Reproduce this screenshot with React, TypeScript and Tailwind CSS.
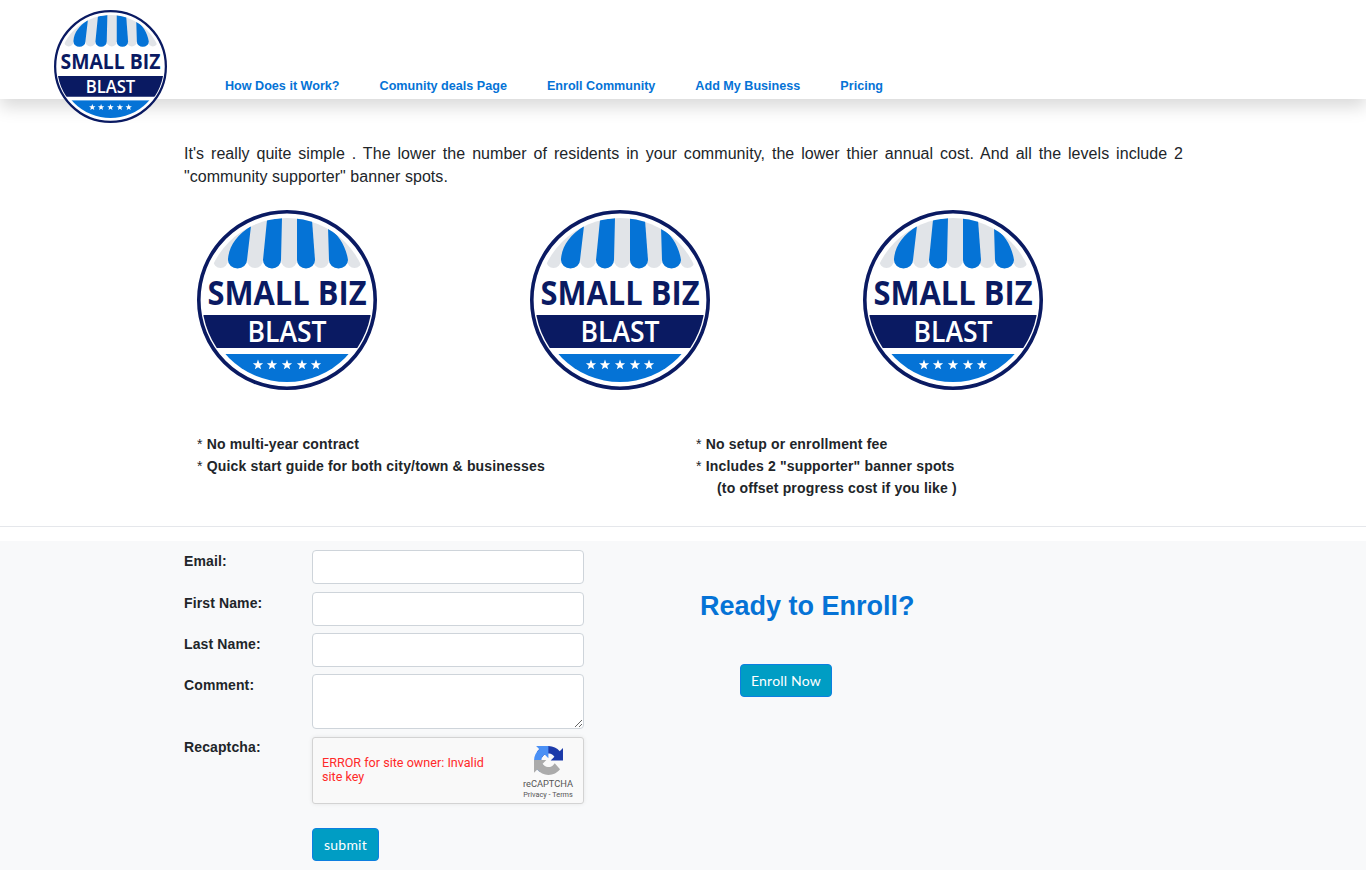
import React from "react";

const stars = [61, 75, 90, 105, 119];

const starPoints = (cx: number, cy: number, r: number) => {
  const pts: string[] = [];
  for (let i = 0; i < 10; i++) {
    const rad = i % 2 === 0 ? r : r * 0.42;
    const a = (Math.PI / 5) * i - Math.PI / 2;
    pts.push(`${(cx + rad * Math.cos(a)).toFixed(2)},${(cy + rad * Math.sin(a)).toFixed(2)}`);
  }
  return pts.join(" ");
};

const Logo: React.FC<{ id: string; className: string }> = ({ id, className }) => (
  <svg viewBox="0 0 180 180" className={`overflow-visible ${className}`}>
    <defs>
      <clipPath id={`${id}-a`}><circle cx="90" cy="90" r="82" /></clipPath>
      <clipPath id={`${id}-b`}><circle cx="90" cy="90" r="85" /></clipPath>
      <clipPath id={`${id}-c`}><circle cx="90" cy="90" r="82" /></clipPath>
    </defs>
    <circle cx="90" cy="90" r="88.2" fill="#fff" stroke="#0a1a62" strokeWidth="3.6" />
    {/* awning */}
    <g clipPath={`url(#${id}-a)`}>
      <path d="M0 0H180V50H165A7.500 8 0 0 1 150 50A9 8 0 0 1 132 50A8 8 0 0 1 116 50A8 8 0 0 1 100 50A8 8 0 0 1 84 50A9 8 0 0 1 66 50A8 8 0 0 1 50 50A9.500 8 0 0 1 31 50A7.500 8 0 0 1 16 50H0Z" fill="#e1e4e8" />
      <path d="M31 49C32 36 40 25 54 16L50 50A9.500 8.500 0 0 1 31 50Z" fill="#0573d6" />
      <path d="M70 10L85 8L84 50A9 8.500 0 0 1 66 50Z" fill="#0573d6" />
      <path d="M100 8L115 10L118 50A9 8.500 0 0 1 100 50Z" fill="#0573d6" />
      <path d="M131 17C141 24 149 36 151 50A9.500 8.500 0 0 1 132 50Z" fill="#0573d6" />
    </g>
    <text x="90" y="94.5" textAnchor="middle" textLength="159" lengthAdjust="spacingAndGlyphs" fontFamily="'Open Sans', sans-serif" fontWeight="700" fontSize="34.500" fill="#0a1a62">SMALL BIZ</text>
    <g clipPath={`url(#${id}-b)`}>
      <path d="M0 105H180L162 138H18Z" fill="#0a1a62" />
    </g>
    <text x="90" y="132" textAnchor="middle" textLength="79" lengthAdjust="spacingAndGlyphs" fontFamily="'Open Sans', sans-serif" fontWeight="600" fontSize="28" fill="#fff">BLAST</text>
    <g clipPath={`url(#${id}-c)`}>
      <rect x="20" y="144" width="140" height="40" fill="#0573d6" />
    </g>
    {stars.map((x) => (
      <polygon key={x} points={starPoints(x, 155, 5.4)} fill="#fff" />
    ))}
  </svg>
);

const RecaptchaIcon = () => (
  <svg viewBox="0 0 64 64" className="w-[29px] h-[29px]">
    <path d="M64 31.955l-.033-1.370V4.687l-7.160 7.160C50.948 4.674 42.033.093 32.050.093c-10.400 0-19.622 4.960-25.458 12.640l11.736 11.860a15.550 15.550 0 0 1 4.754-5.334c2.050-1.600 4.952-2.906 8.968-2.906.485 0 .860.057 1.135.163 4.976.393 9.290 3.140 11.830 7.124l-8.307 8.308c10.522-.040 22.400-.066 27.295.006" fill="#1c3aa9" />
    <path d="M31.950.003l-1.370.033H4.680l7.160 7.160C4.666 13.055.086 21.970.086 31.955c0 10.400 4.960 19.622 12.640 25.458L24.460 45.677a15.550 15.550 0 0 1-5.334-4.754c-1.600-2.050-2.906-4.952-2.906-8.968 0-.485.057-.860.163-1.135.393-4.976 3.140-9.290 7.124-11.830l8.308 8.307c-.040-10.522-.066-22.400.006-27.295" fill="#4a90f5" />
    <path d="M.014 31.955l.033 1.370v25.900l7.160-7.160c5.860 7.173 14.775 11.753 24.760 11.753 10.400 0 19.622-4.960 25.458-12.640L45.690 38.318a15.550 15.550 0 0 1-4.754 5.334c-2.050 1.600-4.952 2.906-8.968 2.906-.485 0-.860-.057-1.135-.163-4.976-.393-9.290-3.140-11.830-7.124l8.307-8.308c-10.522.040-22.400.066-27.295-.006" fill="#ababab" />
  </svg>
);

const navLinks = ["How Does it Work?", "Comunity deals Page", "Enroll Community", "Add My Business", "Pricing"];

const Field: React.FC<{ label: string; className: string; labelClass?: string; children: React.ReactNode }> = ({ label, className, labelClass = "pt-[1px]", children }) => (
  <div className={`flex ${className}`}>
    <label className={`w-[128px] shrink-0 text-[14px] leading-[21px] font-bold text-[#212529] tracking-[0.12px] ${labelClass}`}>{label}</label>
    {children}
  </div>
);

const inputClass = "w-[272px] bg-white border border-[#ced4da] rounded-[4px] block";
const btnClass = "bg-[#009dc4] border border-[#0d7fe0] rounded-[4px] text-white text-[14px] leading-[21px] font-['Lato',sans-serif] tracking-[0.2px]";

export default function App() {
  return (
    <div className="min-h-[896px] bg-white font-['Liberation_Sans',Arial,sans-serif] text-[#212529]">
      <header className="relative h-[99px] bg-white shadow-[0_8px_16px_rgba(0,0,0,0.15)] pl-[225px] flex items-end">
        <Logo id="small" className="absolute left-[54px] top-[10px] w-[113px] h-[113px] z-10" />
        <nav className="flex gap-10 pb-[3px]">
          {navLinks.map((link) => (
            <a key={link} href="#" className="text-[12.6px] leading-[20px] font-bold text-[#0573d6]">{link}</a>
          ))}
        </nav>
      </header>

      <main className="pl-[184px] w-[1183px]">
        <p className="pt-[43px] text-[16px] leading-[23px] text-justify tracking-[0.05px]">
          It's really quite simple . The lower the number of residents in your community, the lower thier annual cost. And all the levels include 2 "community supporter" banner spots.
        </p>
        <div className="grid grid-cols-[333px_333px_333px] pt-[22px] pl-[13px]">
          <Logo id="a" className="w-[180px] h-[180px]" />
          <Logo id="b" className="w-[180px] h-[180px]" />
          <Logo id="c" className="w-[180px] h-[180px]" />
        </div>
        <div className="flex pl-[13px] pt-[43px] text-[14px] leading-[22px] font-bold tracking-[0.17px] h-[136px]">
          <ul className="w-[499px]">
            <li><span className="font-normal">*</span> No multi-year contract</li>
            <li><span className="font-normal">*</span> Quick start guide for both city/town &amp; businesses</li>
          </ul>
          <ul>
            <li><span className="font-normal">*</span> No setup or enrollment fee</li>
            <li><span className="font-normal">*</span> Includes 2 "supporter" banner spots</li>
            <li className="pl-[21px]">(to offset progress cost if you like )</li>
          </ul>
        </div>
      </main>

      <hr className="border-t border-[#e5e7eb] mt-0" />

      <section className="mt-[14px] bg-[#f8f9fa] h-[329px] pl-[184px] pt-[9px] flex">
        <form className="w-[516px]">
          <Field label="Email:" className="mb-[8px]"><input className={`${inputClass} h-[34px]`} /></Field>
          <Field label="First Name:" className="mb-[7px]"><input className={`${inputClass} h-[34px]`} /></Field>
          <Field label="Last Name:" className="mb-[7px]"><input className={`${inputClass} h-[34px]`} /></Field>
          <Field label="Comment:" className="mb-[8px]"><textarea className={`${inputClass} h-[55px]`} /></Field>
          <Field label="Recaptcha:" className="mb-[24px]" labelClass="pt-0">
            <div className="w-[272px] h-[67px] bg-[#f9f9f9] border border-[#d3d3d3] rounded-[3px] shadow-[0_0_4px_rgba(0,0,0,0.08)] flex pl-[9px] pr-[10px] font-['Roboto',sans-serif]">
              <p className="w-[175px] pt-[18px] text-[12.6px] leading-[14px] text-[#ff2a2a]">ERROR for site owner: Invalid site key</p>
              <div className="ml-auto w-[50px] flex flex-col items-center pt-[8px] text-[#555] whitespace-nowrap">
                <RecaptchaIcon />
                <span className="text-[9.3px] leading-[12px] mt-[3px]">reCAPTCHA</span>
                <span className="text-[7.3px] leading-[10px]">Privacy - Terms</span>
              </div>
            </div>
          </Field>
          <div className="pl-[128px]">
            <button type="button" className={`${btnClass} w-[67px] h-[33px]`}>submit</button>
          </div>
        </form>
        <div>
          <h2 className="pt-[39px] text-[27px] leading-[34px] font-bold text-[#0573d6]">Ready to Enroll?</h2>
          <button type="button" className={`${btnClass} mt-[41px] ml-[40px] w-[92px] h-[33px] block`}>Enroll Now</button>
        </div>
      </section>
    </div>
  );
}
